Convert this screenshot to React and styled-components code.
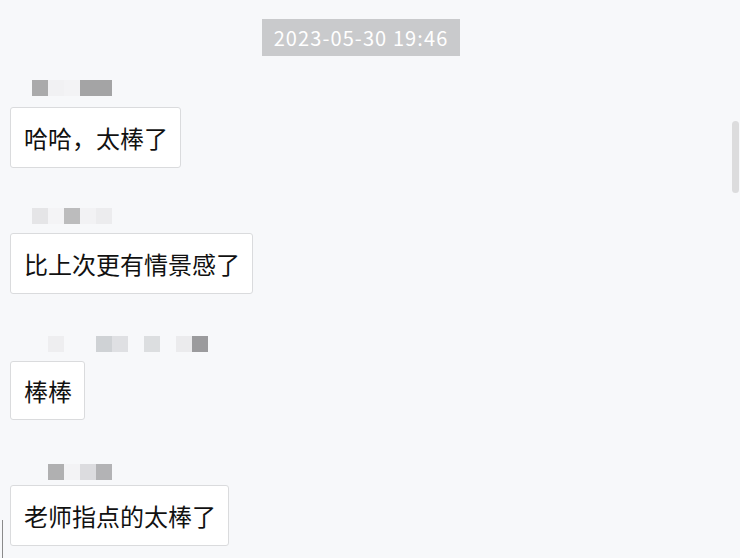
import React from "react";
import styled, { createGlobalStyle } from "styled-components";

const GlobalStyle = createGlobalStyle`
  html, body {
    margin: 0;
    padding: 0;
    background: #f7f8fa;
    overflow: hidden;
  }
  body {
    font-family: "Noto Sans CJK SC", "Liberation Sans", sans-serif;
  }
`;

const Page = styled.div`
  position: relative;
  width: 740px;
  height: 558px;
  overflow: hidden;
  background: #f7f8fa;
`;

const List = styled.div`
  display: flex;
  flex-direction: column;
  padding: 19px 18px 0 10px;
`;

const TimeRow = styled.div`
  display: flex;
  justify-content: center;
  padding-right: 10px;
  margin-bottom: 24px;
`;

const Stamp = styled.div`
  height: 37px;
  padding: 0 12px;
  display: flex;
  align-items: center;
  background: #c9cacc;
  color: #fff;
  font-family: "Noto Sans CJK SC", "Liberation Sans", sans-serif;
  font-size: 20px;
  letter-spacing: 1.1px;
`;

const Group = styled.div`
  height: 128px;
  display: flex;
  flex-direction: column;
  align-items: flex-start;
`;

const Name = styled.div`
  display: flex;
  height: 16px;
  margin-left: ${(p) => p.$indent}px;
`;

const Pixel = styled.span`
  width: 16px;
  height: 16px;
  background: ${(p) => p.$c || "transparent"};
`;

const Bubble = styled.div`
  margin-top: ${(p) => p.$gap}px;
  height: ${(p) => p.$h}px;
  box-sizing: border-box;
  padding: 0 12px 0 13px;
  display: flex;
  align-items: center;
  background: #fff;
  border: 1px solid #dadbdd;
  border-radius: 3px;
  color: #111;
  font-size: 24px;
  white-space: nowrap;
`;

const Scrollbar = styled.div`
  position: absolute;
  right: 1px;
  top: 121px;
  width: 7px;
  height: 72px;
  border-radius: 4px;
  background: #dcdcdd;
`;

const Caret = styled.div`
  position: absolute;
  left: 2px;
  top: 520px;
  width: 1px;
  height: 38px;
  background: #8a8a8a;
`;

const messages = [
  {
    indent: 22,
    gap: 11,
    h: 61,
    name: ["#aaaaab", "#f1f1f3", "#f3f3f5", "#a4a4a5", "#a4a4a5"],
    text: "哈哈，太棒了",
  },
  {
    indent: 22,
    gap: 9,
    h: 61,
    name: ["#e5e5e7", "#f4f4f6", "#bcbcbd", "#f2f2f4", "#ececee"],
    text: "比上次更有情景感了",
  },
  {
    indent: 38,
    gap: 9,
    h: 59,
    name: [
      "#eeeef0",
      null,
      null,
      "#cfd2d5",
      "#dfe0e3",
      null,
      "#dcdee0",
      null,
      "#ebebed",
      "#9b9b9d",
    ],
    text: "棒棒",
  },
  {
    indent: 38,
    gap: 5,
    h: 61,
    name: ["#b0b0b1", "#f3f3f5", "#dcdcdf", "#b3b3b5"],
    text: "老师指点的太棒了",
  },
];

export default function App() {
  return (
    <Page>
      <GlobalStyle />
      <List>
        <TimeRow>
          <Stamp>2023-05-30 19:46</Stamp>
        </TimeRow>
        {messages.map((m, i) => (
          <Group key={i}>
            <Name $indent={m.indent}>
              {m.name.map((c, j) => (
                <Pixel key={j} $c={c} />
              ))}
            </Name>
            <Bubble $gap={m.gap} $h={m.h}>
              {m.text}
            </Bubble>
          </Group>
        ))}
      </List>
      <Scrollbar />
      <Caret />
    </Page>
  );
}
